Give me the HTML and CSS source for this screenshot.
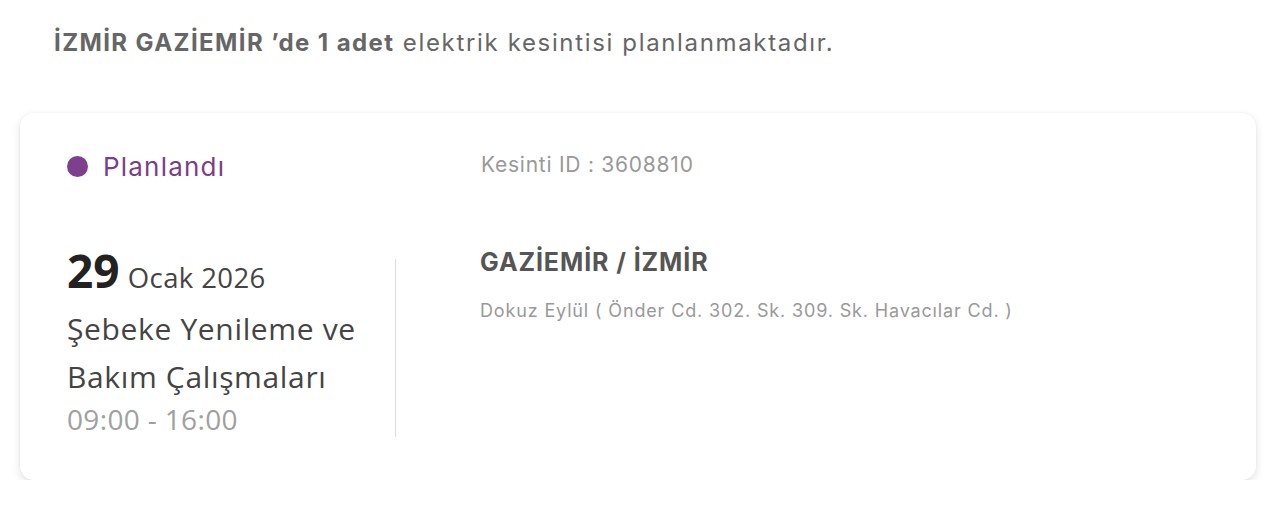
FILE: index.html
```html
<!DOCTYPE html>
<html lang="tr">
<head>
<meta charset="utf-8">
<link rel="stylesheet" href="styles.css">
</head>
<body>
<div class="page">
  <p class="summary"><b>İZMİR GAZİEMİR ’de 1 adet</b> elektrik kesintisi planlanmaktadır.</p>
  <div class="card">
    <div class="row top">
      <div class="status"><span class="dot"></span><span>Planlandı</span></div>
      <div class="kid">Kesinti ID : 3608810</div>
    </div>
    <div class="row bottom">
      <div class="info">
        <div class="date"><span class="day">29</span> <span class="month">Ocak 2026</span></div>
        <div class="reason">Şebeke Yenileme ve Bakım Çalışmaları</div>
        <div class="time">09:00 - 16:00</div>
      </div>
      <div class="divider"></div>
      <div class="loc">
        <div class="place">GAZİEMİR / İZMİR</div>
        <div class="addr">Dokuz Eylül ( Önder Cd. 302. Sk. 309. Sk. Havacılar Cd. )</div>
      </div>
    </div>
  </div>
</div>
</body>
</html>
```
FILE: styles.css
```css
html, body { margin: 0; padding: 0; background: #fff; }
.page { padding: 24px 24px 0 20px; }
.summary {
  margin: 0 0 0 34px;
  font-family: "Inter", "Liberation Sans", sans-serif;
  font-size: 24px;
  letter-spacing: 1.65px;
  color: #666;
  line-height: 38px;
  white-space: nowrap;
}
.summary b { font-weight: 700; letter-spacing: 1.4px; }
.card {
  margin-top: 51px;
  width: 1236px;
  height: 367px;
  box-sizing: border-box;
  background: #fff;
  border-radius: 14px;
  box-shadow: 0 3px 8px rgba(0,0,0,0.12), 0 0 2px rgba(0,0,0,0.05);
  padding: 34px 0 0 47px;
}
.row { display: flex; }
.status {
  width: 414px;
  display: flex; align-items: center; gap: 15px;
  font-family: "Inter", sans-serif;
  font-size: 26px; color: #7a3e8c;
  letter-spacing: 1.2px;
  height: 38px;
}
.dot { width: 21px; height: 21px; border-radius: 50%; background: #7e3f8f; }
.kid { font-family: "Inter", sans-serif; font-size: 21px; color: #999; line-height: 30px; letter-spacing: 0.75px; padding-top: 3px; }
.bottom { margin-top: 62px; }
.info {
  width: 328px;
  font-family: "Open Sans", "Noto Sans", sans-serif;
}
.date { line-height: 46px; color: #222; white-space: nowrap; }
.day { font-size: 46px; font-weight: 700; letter-spacing: 0; }
.month { font-size: 27.5px; color: #444; letter-spacing: 0.4px; margin-left: 4px; }
.reason { font-size: 30px; color: #444; line-height: 48px; width: 320px; margin-top: 0; letter-spacing: 0.65px; }
.time { font-size: 28px; color: #a0a0a0; line-height: 36px; letter-spacing: 0.35px; }
.divider { width: 1px; background: #dcdcdc; margin: 12px 0 0; }
.loc { margin-left: 84px; font-family: "Inter", sans-serif; }
.place { font-size: 25px; font-weight: 700; color: #555; line-height: 32px; margin-top: -1px; letter-spacing: 0.9px; }
.addr { margin-top: 21px; font-size: 18px; color: #999; line-height: 24px; letter-spacing: 0.85px; white-space: nowrap; }
```
